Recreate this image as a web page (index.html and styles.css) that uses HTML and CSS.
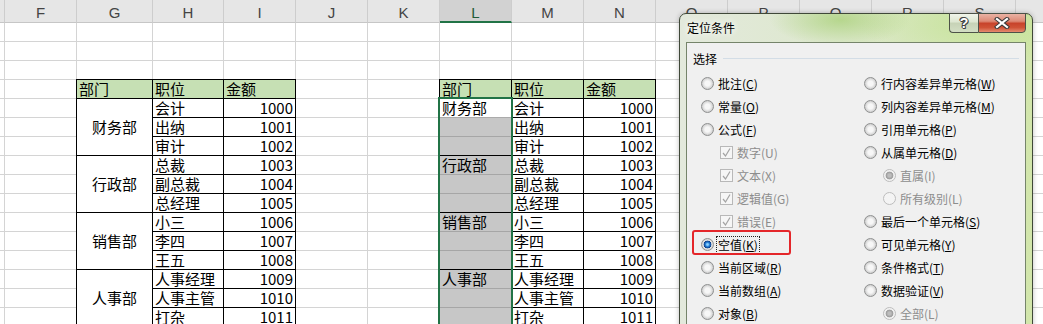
FILE: index.html
```html
<!DOCTYPE html>
<html lang="zh-CN">
<head>
<meta charset="utf-8">
<title>定位条件</title>
<link rel="stylesheet" href="styles.css">
</head>
<body>
<div class="stage">
  <div class="layer cols">
    <div class="col"><div class="hd"></div><div class="body"></div></div>
    <div class="col"><div class="hd">F</div><div class="body"></div></div>
    <div class="col"><div class="hd">G</div><div class="body"></div></div>
    <div class="col"><div class="hd">H</div><div class="body"></div></div>
    <div class="col"><div class="hd">I</div><div class="body"></div></div>
    <div class="col"><div class="hd">J</div><div class="body"></div></div>
    <div class="col"><div class="hd">K</div><div class="body"></div></div>
    <div class="col on"><div class="hd">L</div><div class="body"></div></div>
    <div class="col"><div class="hd">M</div><div class="body"></div></div>
    <div class="col"><div class="hd">N</div><div class="body"></div></div>
    <div class="col"><div class="hd">O</div><div class="body"></div></div>
    <div class="col"><div class="hd">P</div><div class="body"></div></div>
    <div class="col"><div class="hd">Q</div><div class="body"></div></div>
    <div class="col"><div class="hd">R</div><div class="body"></div></div>
    <div class="col"><div class="hd">S</div><div class="body"></div></div>
    <div class="col"><div class="hd"></div><div class="body"></div></div>
  </div>

  <div class="layer cells">
    <div class="tbl tbl-left">
      <div class="c h">部门</div><div class="c h">职位</div><div class="c h">金额</div>
      <div class="c m">财务部</div><div class="c">会计</div><div class="c n">1000</div>
      <div class="c">出纳</div><div class="c n">1001</div>
      <div class="c">审计</div><div class="c n">1002</div>
      <div class="c m">行政部</div><div class="c">总裁</div><div class="c n">1003</div>
      <div class="c">副总裁</div><div class="c n">1004</div>
      <div class="c">总经理</div><div class="c n">1005</div>
      <div class="c m">销售部</div><div class="c">小三</div><div class="c n">1006</div>
      <div class="c">李四</div><div class="c n">1007</div>
      <div class="c">王五</div><div class="c n">1008</div>
      <div class="c m">人事部</div><div class="c">人事经理</div><div class="c n">1009</div>
      <div class="c">人事主管</div><div class="c n">1010</div>
      <div class="c">打杂</div><div class="c n">1011</div>
    </div>

    <div class="tbl tbl-right">
      <div class="c h">部门</div><div class="c h">职位</div><div class="c h">金额</div>
      <div class="c a">财务部</div><div class="c">会计</div><div class="c n">1000</div>
      <div class="c s"></div><div class="c">出纳</div><div class="c n">1001</div>
      <div class="c s end"></div><div class="c">审计</div><div class="c n">1002</div>
      <div class="c s">行政部</div><div class="c">总裁</div><div class="c n">1003</div>
      <div class="c s"></div><div class="c">副总裁</div><div class="c n">1004</div>
      <div class="c s end"></div><div class="c">总经理</div><div class="c n">1005</div>
      <div class="c s">销售部</div><div class="c">小三</div><div class="c n">1006</div>
      <div class="c s"></div><div class="c">李四</div><div class="c n">1007</div>
      <div class="c s end"></div><div class="c">王五</div><div class="c n">1008</div>
      <div class="c s">人事部</div><div class="c">人事经理</div><div class="c n">1009</div>
      <div class="c s"></div><div class="c">人事主管</div><div class="c n">1010</div>
      <div class="c s end"></div><div class="c">打杂</div><div class="c n">1011</div>
      <div class="selbox"></div>
    </div>
  </div>

  <div class="dlg">
    <div class="titlebar">
      <span class="title">定位条件</span>
      <div class="caps">
        <span class="cap help">?</span>
        <span class="cap close"><svg width="16" height="12" viewBox="0 0 16 12"><path d="M3 2 L13 10 M13 2 L3 10" stroke="#3a3a3a" stroke-width="4.2" stroke-linecap="square" fill="none"/><path d="M3 2 L13 10 M13 2 L3 10" stroke="#fff" stroke-width="2.2" stroke-linecap="square" fill="none"/></svg></span>
      </div>
    </div>
    <div class="client">
      <div class="ghead"><span>选择</span><i class="gline"></i></div>
      <div class="opts">
        <div class="opt"><i class="rb"></i><span>批注(<u>C</u>)</span></div>
        <div class="opt"><i class="rb"></i><span>常量(<u>O</u>)</span></div>
        <div class="opt"><i class="rb"></i><span>公式(<u>F</u>)</span></div>
        <div class="opt sub dis"><i class="cb"><svg width="11" height="11" viewBox="0 0 11 11"><path d="M2 6 L4.5 9 L9 1.5" stroke="#a4a4a4" stroke-width="1.2" fill="none"/></svg></i><span>数字(U)</span></div>
        <div class="opt sub dis"><i class="cb"><svg width="11" height="11" viewBox="0 0 11 11"><path d="M2 6 L4.5 9 L9 1.5" stroke="#a4a4a4" stroke-width="1.2" fill="none"/></svg></i><span>文本(X)</span></div>
        <div class="opt sub dis"><i class="cb"><svg width="11" height="11" viewBox="0 0 11 11"><path d="M2 6 L4.5 9 L9 1.5" stroke="#a4a4a4" stroke-width="1.2" fill="none"/></svg></i><span>逻辑值(G)</span></div>
        <div class="opt sub dis"><i class="cb"><svg width="11" height="11" viewBox="0 0 11 11"><path d="M2 6 L4.5 9 L9 1.5" stroke="#a4a4a4" stroke-width="1.2" fill="none"/></svg></i><span>错误(E)</span></div>
        <div class="opt"><i class="rb on"></i><span class="focus">空值(<u>K</u>)</span></div>
        <div class="opt"><i class="rb"></i><span>当前区域(<u>R</u>)</span></div>
        <div class="opt"><i class="rb"></i><span>当前数组(<u>A</u>)</span></div>
        <div class="opt"><i class="rb"></i><span>对象(<u>B</u>)</span></div>

        <div class="opt"><i class="rb"></i><span>行内容差异单元格(<u>W</u>)</span></div>
        <div class="opt"><i class="rb"></i><span>列内容差异单元格(<u>M</u>)</span></div>
        <div class="opt"><i class="rb"></i><span>引用单元格(<u>P</u>)</span></div>
        <div class="opt"><i class="rb"></i><span>从属单元格(<u>D</u>)</span></div>
        <div class="opt sub dis"><i class="rb on"></i><span>直属(I)</span></div>
        <div class="opt sub dis"><i class="rb"></i><span>所有级别(L)</span></div>
        <div class="opt"><i class="rb"></i><span>最后一个单元格(<u>S</u>)</span></div>
        <div class="opt"><i class="rb"></i><span>可见单元格(<u>Y</u>)</span></div>
        <div class="opt"><i class="rb"></i><span>条件格式(<u>T</u>)</span></div>
        <div class="opt"><i class="rb"></i><span>数据验证(<u>V</u>)</span></div>
        <div class="opt sub dis"><i class="rb on"></i><span>全部(L)</span></div>
      </div>
      <div class="redbox"></div>
    </div>
  </div>
</div>
</body>
</html>
```

FILE: styles.css
```css
* { box-sizing: border-box; margin: 0; padding: 0; }
html, body { width: 1043px; height: 324px; overflow: hidden; background: #fff; }
body { font-family: "Noto Sans CJK SC", "Liberation Sans", sans-serif; color: #000; }

.stage {
  position: relative;
  display: grid;
  grid-template-columns: 1043px;
  grid-template-rows: 324px;
  width: 1043px;
  height: 324px;
  overflow: hidden;
}
.layer { grid-area: 1 / 1; }

/* column backgrounds with gridlines */
.cols {
  display: grid;
  grid-template-columns: 5px 72px 76px 71px repeat(12, 72px);
  height: 340px;
}
.col { display: flex; flex-direction: column; }
.hd {
  height: 23px;
  background: #e6e6e6;
  border-right: 1px solid #cdcdcd;
  border-bottom: 1px solid #c6c6c6;
  font: 15px/21px "Liberation Sans", sans-serif;
  color: #444;
  text-align: center;
  padding-top: 2px;
}
.col.on .hd {
  background: #d2d2d2;
  border-bottom: 2px solid #217346;
  color: #1f5c38;
}
.body {
  flex: 1;
  border-right: 1px solid #d4d4d4;
  background: repeating-linear-gradient(180deg, transparent 0 18px, #d4d4d4 18px 19px);
}

/* cells layer */
.cells {
  display: grid;
  grid-template-columns: 5px 72px 76px 71px repeat(12, 72px);
  grid-template-rows: 23px repeat(16, 19px);
}
.tbl {
  display: grid;
  grid-auto-rows: 19px;
  margin: -1px 0 0 -1px;
  border-left: 1px solid #000;
  border-top: 1px solid #000;
  font-size: 15px;
  position: relative;
}
.tbl-left { grid-column: 3 / span 3; grid-row: 5 / span 13; grid-template-columns: 76px 71px 72px; }
.tbl-right { grid-column: 8 / span 3; grid-row: 5 / span 13; grid-template-columns: 72px 72px 72px; }

.c {
  background: #fff;
  border-right: 1px solid #000;
  border-bottom: 1px solid #000;
  line-height: 18px;
  padding: 0 2px;
  white-space: nowrap;
}
.c.h { background: #c6e0b4; }
.c.n { text-align: right; }
.c.m { grid-row: span 3; display: flex; align-items: center; justify-content: center; }
.c.a { border-bottom-color: #ababab; }
.c.s { background: #c7c7c7; border-bottom-color: #a6a6a6; }
.c.s.end { border-bottom-color: #000; }

.selbox {
  position: absolute;
  left: -2px;
  top: 17px;
  width: 75px;
  height: 300px;
  border: 2px solid #217346;
  pointer-events: none;
}

/* dialog */
.dlg {
  position: absolute;
  left: 679px;
  top: 13px;
  width: 354px;
  height: 330px;
  border: 1px solid #3f4838;
  border-radius: 7px 7px 0 0;
  background:
    radial-gradient(ellipse 70px 26px at 160px 6px, rgba(150, 200, 90, 0.55), transparent),
    radial-gradient(ellipse 120px 40px at 300px 10px, rgba(190, 225, 140, 0.6), transparent),
    linear-gradient(90deg, #e3e9dc 0, #dde8cd 45%, #d2e6ab 100%);
  display: flex;
  flex-direction: column;
  box-shadow: 0 0 5px rgba(0, 0, 0, 0.25);
}
.titlebar {
  height: 28px;
  display: flex;
  justify-content: space-between;
  align-items: flex-start;
  padding-left: 7px;
}
.title {
  font-size: 12px;
  line-height: 27px;
  text-shadow: 0 0 6px #fff, 0 0 10px #fff;
}
.caps { display: flex; margin: -1px 6px 0 0; }
.cap {
  height: 20px;
  border: 1px solid #4d5248;
  display: flex;
  align-items: center;
  justify-content: center;
}
.help {
  width: 29px;
  border-right: none;
  border-radius: 0 0 0 4px;
  background: linear-gradient(180deg, #f0f4ea 0, #dde6d0 45%, #c6d2b6 50%, #d3dec4 100%);
  font: bold 14px/1 "Liberation Sans", sans-serif;
  color: #fff;
  text-shadow: 1px 0 0 #444, -1px 0 0 #444, 0 1px 0 #444, 0 -1px 0 #444, 1px 1px 0 #444, -1px -1px 0 #444;
}
.close {
  width: 48px;
  border-radius: 0 0 4px 0;
  background: linear-gradient(180deg, #eab2a4 0, #dd8a76 40%, #c8432b 52%, #cf5236 75%, #e58b70 100%);
}

.client {
  position: relative;
  flex: 1;
  margin: 0 6px;
  border: 1px solid #75846a;
  background: #f0f0f0;
  padding: 0 6px;
  font-size: 12px;
}
.ghead {
  display: flex;
  align-items: center;
  gap: 6px;
  height: 20px;
  margin-top: 5px;
}
.gline { flex: 1; height: 1px; background: #d3dde6; }

.opts {
  margin-top: 4px;
  padding-left: 8px;
  display: grid;
  grid-template-columns: 163px 1fr;
  grid-template-rows: repeat(11, 23px);
  grid-auto-flow: column;
}
.opt {
  display: flex;
  align-items: center;
  gap: 4px;
  white-space: nowrap;
  line-height: 16px;
}
.opt u { text-underline-offset: 1px; }
.opt.sub { padding-left: 19px; }
.opt.dis { color: #8d8d8d; }

.rb {
  width: 13px;
  height: 13px;
  flex: none;
  border-radius: 50%;
  border: 1px solid #8f9090;
  background: radial-gradient(circle at 50% 50%, #f7f7f7 0 2.5px, #e4e4e4 4px, #cfcfcf 5.5px);
}
.rb.on {
  background: radial-gradient(circle at 50% 50%, #8fd2ff 0 0.8px, #2b86dc 2px, #0d3f8a 3.6px, #e6e6e6 4.2px, #d2d2d2 5.5px);
}
.dis .rb {
  border-color: #bdbdbd;
  background: #f4f4f4;
}
.dis .rb.on {
  background: radial-gradient(circle at 50% 50%, #bdbdbd 0 1.5px, #9a9a9a 3.5px, #eeeeee 4.2px, #f4f4f4 5.5px);
}
.cb {
  width: 13px;
  height: 13px;
  flex: none;
  border: 1px solid #b8b8b8;
  background: #f6f6f6;
  display: flex;
  align-items: center;
  justify-content: center;
}
.cb svg { display: block; }

.focus {
  border: 1px dotted #222;
  padding: 0 1px;
  margin-left: -2px;
  line-height: 16px;
}

.redbox {
  position: absolute;
  left: 5px;
  top: 187px;
  width: 99px;
  height: 25px;
  border: 2px solid #e4262a;
  border-radius: 3px;
  pointer-events: none;
}
```
